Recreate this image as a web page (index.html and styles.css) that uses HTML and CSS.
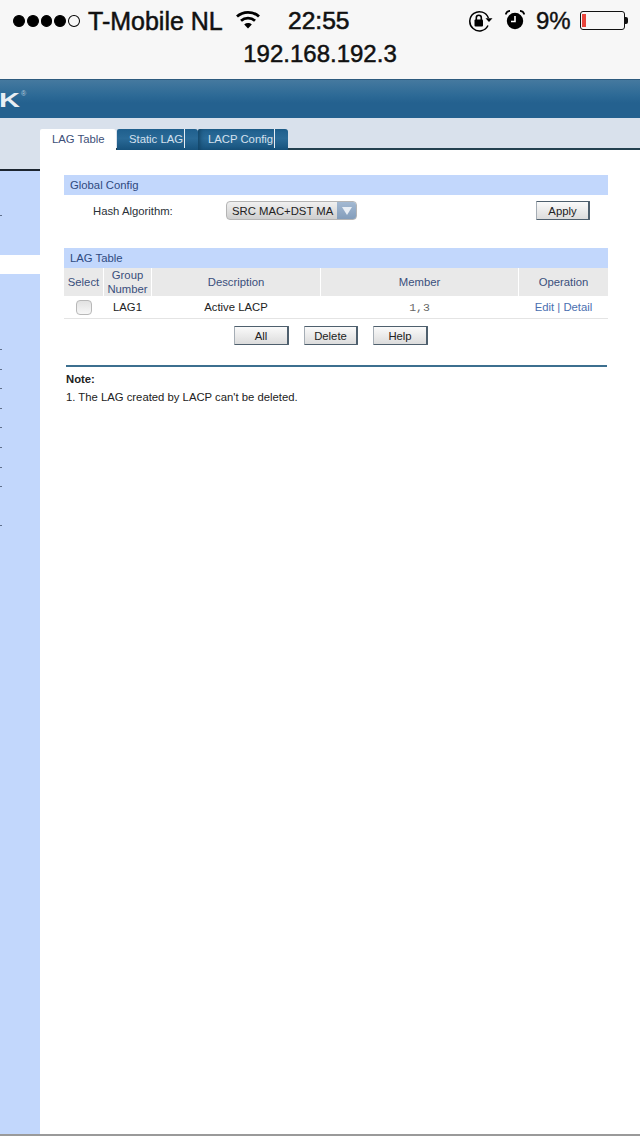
FILE: index.html
```html
<!DOCTYPE html>
<html lang="en">
<head>
<meta charset="utf-8">
<title>192.168.192.3</title>
<link rel="stylesheet" href="styles.css">
</head>
<body>
<header class="chrome">
  <div class="status">
    <div class="dots"><i></i><i></i><i></i><i></i><i class="empty"></i></div>
    <span class="carrier">T-Mobile NL</span>
    <svg class="wifi" width="24" height="19" viewBox="0 0 24 19" fill="none" stroke="#000" stroke-width="2.8">
      <path d="M1 6.5C7 .9 17 .9 23 6.5"/>
      <path d="M5 10.8C9 7.2 15 7.2 19 10.8"/>
      <path d="M12 18.5L8.2 14.4C10.4 12.6 13.6 12.6 15.8 14.4Z" fill="#000" stroke="none"/>
    </svg>
    <span class="time">22:55</span>
    <svg class="rotlock" width="25" height="22" viewBox="0 0 25 22" fill="none" stroke="#000" stroke-width="1.5">
      <path d="M20 15.5A9.6 9.6 0 1 1 20.4 8"/>
      <path d="M17.5 8.2L24.5 8.2L21 12Z" fill="#000" stroke="none"/>
      <rect x="6.5" y="9.5" width="8.5" height="7" rx="1" fill="#000" stroke="none"/>
      <path d="M8.3 10V7.8a2.5 2.5 0 0 1 5 0V10" stroke-width="1.6"/>
    </svg>
    <svg class="alarm" width="20" height="20" viewBox="0 0 20 20">
      <circle cx="10" cy="11" r="8.2" fill="#000"/>
      <path d="M10 6V11.5H6" fill="none" stroke="#fff" stroke-width="1.6"/>
      <path d="M.6 4.5C1.4 2 3 .9 5 .8M19.4 4.5C18.6 2 17 .9 15 .8" fill="none" stroke="#000" stroke-width="1.7"/>
    </svg>
    <span class="percent">9%</span>
    <div class="battery"><div class="charge"></div></div>
    <div class="nub"></div>
  </div>
  <div class="address">192.168.192.3</div>
</header>
<div class="banner"><span class="logo">K</span><span class="reg">®</span></div>
<div class="page">
  <nav class="sidebar">
    <div class="side-top"></div>
    <div class="side-blue side-a"><i class="tick tick-first"></i></div>
    <div class="side-active"></div>
    <div class="side-blue side-b">
      <i class="tick"></i><i class="tick"></i><i class="tick"></i><i class="tick"></i>
      <i class="tick"></i><i class="tick"></i><i class="tick"></i><i class="tick"></i>
      <i class="tick tick-last"></i>
    </div>
  </nav>
  <main class="main">
    <div class="tabbar">
      <div class="tab tab-on">LAG Table</div>
      <div class="tab tab-static"><span>Static LAG</span></div>
      <div class="tab tab-lacp"><span>LACP Config</span></div>
    </div>
    <section class="panel">
      <h2 class="bar">Global Config</h2>
      <div class="hash-row">
        <span class="hash-label">Hash Algorithm:</span>
        <div class="select">
          <span class="select-value">SRC MAC+DST MA</span>
          <span class="select-arrow"><svg width="12" height="10" viewBox="0 0 12 10"><path d="M1 1H11L6 9Z" fill="#e8eef5"/></svg></span>
        </div>
        <button class="btn btn-apply">Apply</button>
      </div>
      <h2 class="bar bar-lag">LAG Table</h2>
      <div class="grid">
        <div class="th">Select</div>
        <div class="th">Group Number</div>
        <div class="th">Description</div>
        <div class="th">Member</div>
        <div class="th">Operation</div>
        <div class="td"><span class="check"></span></div>
        <div class="td">LAG1</div>
        <div class="td">Active LACP</div>
        <div class="td mono">1,3</div>
        <div class="td ops"><a>Edit</a> | <a>Detail</a></div>
      </div>
      <div class="actions">
        <button class="btn">All</button>
        <button class="btn btn-delete">Delete</button>
        <button class="btn">Help</button>
      </div>
      <div class="note">
        <p class="note-title">Note:</p>
        <p class="note-text">1. The LAG created by LACP can't be deleted.</p>
      </div>
    </section>
  </main>
</div>
<div class="foot"></div>
</body>
</html>
```
FILE: styles.css
```css
* { box-sizing: border-box; }
html, body { margin: 0; padding: 0; }
body {
  width: 640px;
  height: 1136px;
  overflow: hidden;
  background: #fff;
  font-family: "Liberation Sans", Arial, sans-serif;
  display: flex;
  flex-direction: column;
}
p, h2 { margin: 0; font-weight: normal; }

/* iOS chrome */
.chrome { height: 79px; background: #f7f7f7; color: #111; flex: none; }
.status { display: flex; align-items: center; height: 42px; padding-left: 13px; }
.dots { display: flex; gap: 2px; width: 67px; }
.dots i { width: 12px; height: 12px; border-radius: 50%; background: #000; border: 1px solid #000; }
.dots i.empty { background: transparent; }
.carrier { margin-left: 8px; width: 135px; font-size: 25px; white-space: nowrap; -webkit-text-stroke: .5px #111; }
.wifi { margin-left: 13px; margin-top: -3px; }
.time { margin-left: 28px; width: 62px; font-size: 24.6px; -webkit-text-stroke: .6px #111; white-space: nowrap; }
.rotlock { margin-left: 118px; margin-top: -1px; }
.alarm { margin-left: 12px; margin-top: -2px; }
.percent { margin-left: 11px; width: 37px; font-size: 24px; -webkit-text-stroke: .4px #111; }
.battery { margin-left: 7px; width: 45px; height: 19px; border: 1px solid #111; border-radius: 3px; padding: 2px 1px; margin-top: -1px; }
.charge { width: 4px; height: 100%; background: #e8453c; }
.nub { width: 3px; height: 7px; background: #111; border-radius: 0 2px 2px 0; margin-top: -1px; }
.address { text-align: center; font-size: 24px; line-height: 24px; -webkit-text-stroke: .5px #111; }

/* banner */
.banner {
  height: 39px; flex: none; overflow: hidden;
  display: flex; align-items: flex-start;
  border-top: 1px solid #2d5b7e;
  background: linear-gradient(#45799f 0%, #2d6a96 40%, #24618f 60%, #24618f 100%);
}
.logo {
  display: block; color: #e9eef3; font-weight: bold; font-size: 20px; line-height: 20px;
  margin: 10px 0 0 0; transform: scaleX(1.45); transform-origin: 100% 50%; width: 20px; text-align: right;
}
.reg { color: #b9cbdb; font-size: 7px; line-height: 8px; margin: 10px 0 0 1px; }

/* layout */
.page { flex: 1; display: flex; min-height: 0; }
.sidebar { width: 40px; flex: none; display: flex; flex-direction: column; }
.side-top { height: 53px; background: #d9e1ec; border-bottom: 2px solid #1c2530; flex: none; }
.side-blue { background: #c2d7fc; }
.side-a { height: 84px; flex: none; overflow: hidden; }
.side-active { height: 19px; background: #fff; flex: none; }
.side-b { flex: 1; padding-top: 75px; }
.tick { display: block; width: 2px; height: 1px; background: #5f6f8c; margin-bottom: 18.6px; }
.tick-first { margin: 44px 0 0; }
.tick-last { margin-top: 38px; }

.main { flex: 1; min-width: 0; }
.tabbar {
  height: 32px; display: flex; align-items: flex-end;
  background: #d9e1ec; border-bottom: 2px solid #24404f;
  font-size: 11.3px;
}
.tab { height: 21px; line-height: 20px; white-space: nowrap; margin-bottom: -2px; }
.tab-on {
  width: 76px; padding-left: 12px; background: #fff; color: #3d4f78; border-radius: 2px 3px 0 0;
}
.tab-static, .tab-lacp {
  background: linear-gradient(#1f5f8d, #2a6a97 45%, #17527c);
  color: #d4e0ee; margin-left: 1px; border-radius: 2px 3px 0 0;
}
.tab-static { width: 81px; padding-left: 12px; }
.tab-lacp { width: 90px; margin-left: 0; padding-left: 10px; box-shadow: inset 4px 0 4px -2px #124364; }
.tab span { display: block; border-right: 1px solid #e6edf4; height: 19px; line-height: 20px; }
.tab-static span { width: 56px; }
.tab-lacp span { width: 67px; }

.panel { padding: 25px 32px 0 24px; font-size: 11.3px; }
.bar { height: 20px; line-height: 20px; background: #c2d7fc; color: #2f4a80; font-size: 11.3px; padding-left: 6px; }
.hash-row { display: flex; align-items: center; height: 25px; margin-top: 3px; color: #2a3138; }
.hash-label { width: 133px; padding-left: 29px; white-space: nowrap; }
.select {
  margin-left: 29px; width: 131px; height: 19px; display: flex;
  border: 1px solid #b4b4b4; border-radius: 4px; overflow: hidden;
  background: linear-gradient(#f0f0f0, #cfcfcf);
}
.select-value { width: 110px; padding-left: 5px; line-height: 18px; color: #222; white-space: nowrap; overflow: hidden; }
.select-arrow { flex: 1; display: flex; align-items: center; justify-content: center; background: linear-gradient(#a3b9d2, #839dbb); }
.btn {
  width: 55px; height: 19px; padding: 1px 0 0; font: 11.3px "Liberation Sans", Arial, sans-serif; color: #222;
  background: linear-gradient(#fafafa, #dcdcdc);
  border: 1px solid #4e5f6d; border-left-color: #a5adb5; border-right-width: 2px; border-radius: 1px;
}
.btn-apply { margin-left: 179px; width: 54px; }
.btn-delete { width: 54px; }
.bar-lag { margin-top: 25px; }
.grid {
  display: grid; grid-template-columns: 39px 47px 168px 197px 89px;
  column-gap: 1px; border-bottom: 1px solid #e4e4e4;
}
.th {
  height: 28px; background: #e9e9e9; color: #3a4f7c; display: flex; align-items: center; justify-content: center;
  text-align: center; line-height: 14px;
}
.td { height: 22px; display: flex; align-items: center; justify-content: center; color: #222; }
.mono { font-family: "Liberation Mono", monospace; font-size: 11.5px; color: #666; }
.ops { color: #4a6fb0; white-space: pre; }
.ops a { color: #4a6fb0; }
.check {
  width: 16px; height: 15px; border-radius: 4px; border: 1px solid #b8b8b8;
  background: linear-gradient(#e2e2e2, #f7f7f7);
}
.actions { display: flex; gap: 15px; margin: 7px 0 0 170px; }
.note { margin: 20px 1px 0 2px; border-top: 2px solid #3c6f8f; color: #222; }
.note-title { font-weight: bold; padding-top: 6px; line-height: 13px; }
.note-text { margin-top: 5px; line-height: 13px; }
.foot { height: 2px; flex: none; background: #9a9a9a; }
```
